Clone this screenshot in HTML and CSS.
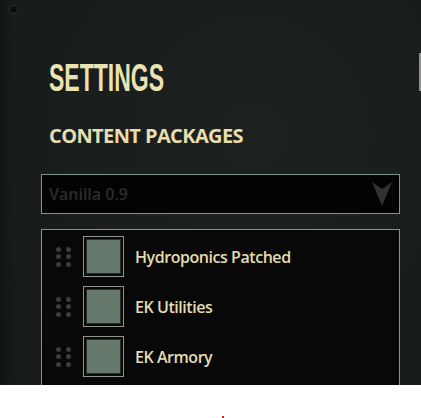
FILE: index.html
```html
<!DOCTYPE html>
<html lang="en">
<head>
<meta charset="utf-8">
<title>Settings</title>
<link rel="stylesheet" href="styles.css">
</head>
<body>
  <div class="window">
    <span class="corner-knob"></span>
    <span class="scroll-thumb"></span>

    <h1 class="title"><span class="title-text">SETTINGS</span></h1>
    <h2 class="section">CONTENT PACKAGES</h2>

    <div class="dropdown">
      <span class="dropdown-value">Vanilla 0.9</span>
      <svg class="dropdown-arrow" width="20" height="24" viewBox="0 0 20 24">
        <path d="M0 0 L10 7 L20 0 L10 24 Z" fill="#313332"/>
      </svg>
    </div>

    <div class="package-list">
      <div class="package">
        <span class="handle"><i></i><i></i><i></i><i></i><i></i><i></i></span>
        <span class="checkbox"><span class="checkbox-fill"></span></span>
        <span class="package-name">Hydroponics Patched</span>
      </div>
      <div class="package">
        <span class="handle"><i></i><i></i><i></i><i></i><i></i><i></i></span>
        <span class="checkbox"><span class="checkbox-fill"></span></span>
        <span class="package-name">EK Utilities</span>
      </div>
      <div class="package">
        <span class="handle"><i></i><i></i><i></i><i></i><i></i><i></i></span>
        <span class="checkbox"><span class="checkbox-fill"></span></span>
        <span class="package-name">EK Armory</span>
      </div>
    </div>
  </div>
  <div class="footer"><span class="cursor-dot"></span></div>
</body>
</html>
```

FILE: styles.css
```css
html, body {
  margin: 0;
  padding: 0;
  background: #ffffff;
}

body {
  width: 421px;
  height: 418px;
  overflow: hidden;
  font-family: "Open Sans", "DejaVu Sans", sans-serif;
}

.window {
  position: relative;
  height: 385px;
  overflow: hidden;
  background:
    linear-gradient(90deg, rgba(0, 0, 0, 0.25) 0, rgba(0, 0, 0, 0) 14px),
    radial-gradient(ellipse at 60% 35%, #1d2221 0%, #191e1c 55%, #151918 100%);
  display: flex;
  flex-direction: column;
}

.corner-knob {
  position: absolute;
  left: 10px;
  top: 6px;
  width: 7px;
  height: 7px;
  border-radius: 50%;
  background: #0c0d0d;
  box-shadow: 0 0 0 1px #2d3230;
}

.scroll-thumb {
  position: absolute;
  right: 0;
  top: 53px;
  width: 2px;
  height: 38px;
  background: #8f9190;
}

.title {
  margin: 0;
  padding: 58px 0 0 49px;
  height: 40px;
  line-height: 40px;
  font-family: "Liberation Sans", Arial, sans-serif;
  font-size: 38px;
  font-weight: 700;
  color: #ebe3b3;
}

.title-text {
  display: inline-block;
  transform: scaleX(0.605);
  transform-origin: left center;
}

.section {
  margin: 26px 0 0 49px;
  height: 24px;
  line-height: 24px;
  font-size: 20px;
  font-weight: 700;
  letter-spacing: -0.6px;
  color: #e6deb0;
}

.dropdown {
  margin: 26px 21px 0 41px;
  height: 38px;
  border: 1px solid #7f978a;
  background: #030303;
  display: flex;
  align-items: center;
  justify-content: space-between;
  padding: 0 7px 0 7px;
}

.dropdown-value {
  font-size: 16px;
  font-weight: 600;
  color: #2b2c2c;
}

.dropdown-arrow {
  display: block;
}

.package-list {
  margin: 15px 21px 0 41px;
  border: 1px solid #7f978a;
  border-bottom: none;
  background: #080808;
  padding-top: 6px;
  display: flex;
  flex-direction: column;
  gap: 9px;
  flex: 1;
}

.package {
  display: flex;
  align-items: center;
  padding-left: 14px;
}

.handle {
  display: grid;
  grid-template-columns: 5px 5px;
  grid-auto-rows: 5px;
  column-gap: 5px;
  row-gap: 2.5px;
  margin-right: 12px;
}

.handle i {
  width: 5px;
  height: 5px;
  border-radius: 50%;
  background: #3b3d3c;
}

.checkbox {
  width: 35px;
  height: 35px;
  padding: 2px;
  border: 1px solid #8e9591;
  display: flex;
}

.checkbox-fill {
  flex: 1;
  border: 1px solid #27302b;
  background: #66786c;
}

.package-name {
  margin-left: 11px;
  font-size: 16px;
  font-weight: 600;
  letter-spacing: -0.45px;
  color: #e4dcaf;
}

.footer {
  position: relative;
  height: 33px;
}

.cursor-dot {
  position: absolute;
  left: 222px;
  top: 31px;
  width: 2px;
  height: 2px;
  background: #d02020;
}
```
